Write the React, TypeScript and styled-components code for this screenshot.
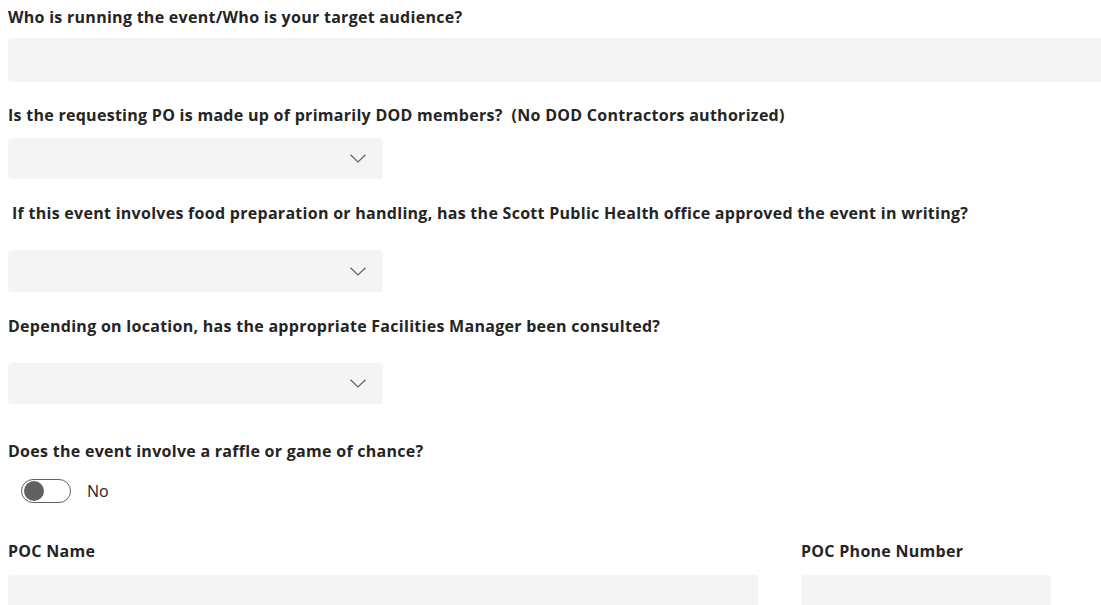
import React from "react";
import styled, { createGlobalStyle } from "styled-components";

const Global = createGlobalStyle`
  html, body { margin: 0; padding: 0; background: #ffffff; overflow: hidden; }
  body { font-family: "Segoe UI", "Open Sans", "Noto Sans", sans-serif; color: #242424; }
`;

const Page = styled.div`
  display: flex;
  flex-direction: column;
  padding: 7px 0 0 8px;
  width: 1101px;
  box-sizing: border-box;
`;

const Field = styled.div<{ $gap: number; $after: number }>`
  display: flex;
  flex-direction: column;
  gap: ${(p) => p.$gap}px;
  margin-bottom: ${(p) => p.$after}px;
`;

const Label = styled.div<{ $indent?: number }>`
  font-family: "Open Sans", "Noto Sans", sans-serif;
  font-weight: 700;
  font-size: 16px;
  line-height: 21px;
  height: 21px;
  color: #242424;
  white-space: pre;
  padding-left: ${(p) => p.$indent ?? 0}px;
  letter-spacing: 0.28px;
`;

const TextBox = styled.div<{ $w: number; $h: number }>`
  width: ${(p) => p.$w}px;
  height: ${(p) => p.$h}px;
  background: #f4f4f4;
  border-radius: 4px;
  box-sizing: border-box;
`;

const Dropdown = styled.div<{ $h: number }>`
  width: 375px;
  height: ${(p) => p.$h}px;
  background: #f4f4f4;
  border-radius: 4px;
  display: flex;
  align-items: center;
  justify-content: flex-end;
  padding-right: 17px;
  box-sizing: border-box;
`;

const Chevron = () => (
  <svg width="16" height="9" viewBox="0 0 16 9" fill="none">
    <path d="M0.5 0.7 L8 8 L15.5 0.7" stroke="#616161" strokeWidth="1.2" />
  </svg>
);

const ToggleRow = styled.div`
  display: flex;
  align-items: center;
  gap: 16px;
  padding-left: 13px;
  height: 24px;
`;

const Track = styled.div`
  width: 50px;
  height: 24px;
  border: 1px solid #616161;
  border-radius: 12px;
  box-sizing: border-box;
  display: flex;
  align-items: center;
  padding-left: 2px;
`;

const Knob = styled.div`
  width: 20px;
  height: 20px;
  border-radius: 50%;
  background: #616161;
`;

const ToggleText = styled.span`
  font-family: "Open Sans", "Noto Sans", sans-serif;
  font-size: 16px;
  color: #242424;
`;

const Row = styled.div`
  display: flex;
  gap: 43px;
`;

export default function App() {
  return (
    <>
      <Global />
      <Page>
        <Field $gap={10} $after={23}>
          <Label>Who is running the event/Who is your target audience?</Label>
          <TextBox $w={1100} $h={44} />
        </Field>
        <Field $gap={12} $after={24}>
          <Label>Is the requesting PO is made up of primarily DOD members?  (No DOD Contractors authorized)</Label>
          <Dropdown $h={41}>
            <Chevron />
          </Dropdown>
        </Field>
        <Field $gap={26} $after={24}>
          <Label $indent={4}>If this event involves food preparation or handling, has the Scott Public Health office approved the event in writing?</Label>
          <Dropdown $h={42}>
            <Chevron />
          </Dropdown>
        </Field>
        <Field $gap={26} $after={37}>
          <Label>Depending on location, has the appropriate Facilities Manager been consulted?</Label>
          <Dropdown $h={41}>
            <Chevron />
          </Dropdown>
        </Field>
        <Field $gap={17} $after={38}>
          <Label>Does the event involve a raffle or game of chance?</Label>
          <ToggleRow>
            <Track>
              <Knob />
            </Track>
            <ToggleText>No</ToggleText>
          </ToggleRow>
        </Field>
        <Row>
          <Field $gap={13} $after={0}>
            <Label>POC Name</Label>
            <TextBox $w={750} $h={44} />
          </Field>
          <Field $gap={13} $after={0}>
            <Label>POC Phone Number</Label>
            <TextBox $w={250} $h={44} />
          </Field>
        </Row>
      </Page>
    </>
  );
}
